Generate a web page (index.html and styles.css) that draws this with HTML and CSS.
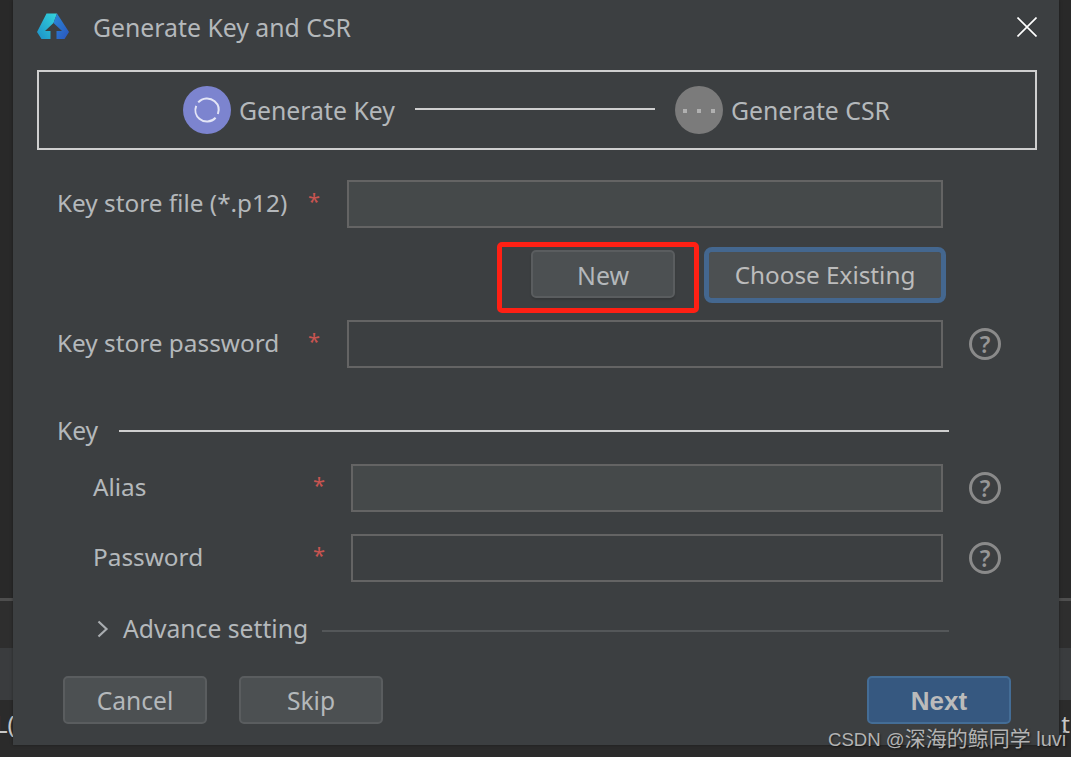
FILE: index.html
```html
<!DOCTYPE html>
<html lang="en">
<head>
<meta charset="utf-8">
<title>Generate Key and CSR</title>
<link rel="stylesheet" href="styles.css">
</head>
<body>
<div class="stage">
  <div class="band band-top"></div>
  <div class="band-line"></div>
  <div class="band band-mid"></div>
  <div class="band band-light"></div>
  <div class="band band-bottom">
    <span class="peek peek-left">L(</span>
    <span class="peek peek-right">t</span>
  </div>
</div>

<section class="dialog">
  <header class="titlebar">
    <svg class="logo" viewBox="0 0 32 26" width="32" height="26" aria-hidden="true">
      <defs>
        <linearGradient id="lg-a" x1="0" y1="1" x2="1" y2="0">
          <stop offset="0" stop-color="#1c8fc8"/>
          <stop offset="1" stop-color="#34d6dc"/>
        </linearGradient>
        <linearGradient id="lg-b" x1="0" y1="0" x2="1" y2="1">
          <stop offset="0" stop-color="#2a8ad8"/>
          <stop offset="1" stop-color="#2b55bd"/>
        </linearGradient>
      </defs>
      <path fill="url(#lg-a)" d="M9.5 0.5H20L16.5 10L8 18H13.5V26H4.5L0 19Z"/>
      <path fill="url(#lg-b)" d="M20 0.5L32 19L27.5 26H19.5V18H25L16.5 10Z"/>
    </svg>
    <h1 class="title">Generate Key and CSR</h1>
    <svg class="close" viewBox="0 0 20 20" width="20" height="20" aria-hidden="true">
      <path d="M0.5 0.5L19.5 19.5M19.5 0.5L0.5 19.5" stroke="#fff" stroke-width="1.6" fill="none"/>
    </svg>
  </header>

  <div class="steps">
    <div class="step">
      <span class="dot dot-active">
        <svg viewBox="0 0 48 48" width="48" height="48" aria-hidden="true">
          <circle cx="24" cy="24" r="11.6" fill="none" stroke="#e3e5f6" stroke-width="2" stroke-dasharray="32 4.45" transform="rotate(-139 24 24)"/>
        </svg>
      </span>
      <span class="step-name">Generate Key</span>
    </div>
    <span class="step-line"></span>
    <div class="step">
      <span class="dot dot-idle">
        <svg viewBox="0 0 48 48" width="48" height="48" aria-hidden="true">
          <rect x="8" y="23" width="4" height="4" fill="#b0b0b0"/>
          <rect x="22" y="23" width="4" height="4" fill="#b0b0b0"/>
          <rect x="36" y="23" width="4" height="4" fill="#b0b0b0"/>
        </svg>
      </span>
      <span class="step-name">Generate CSR</span>
    </div>
  </div>

  <form class="form">
    <div class="row row-file">
      <label class="label">Key store file (*.p12)</label>
      <span class="star">*</span>
      <span class="input input-disabled"></span>
    </div>

    <div class="actions">
      <span class="new-wrap">
        <button type="button" class="btn">New</button>
        <span class="annotation"></span>
      </span>
      <button type="button" class="btn btn-focus">Choose Existing</button>
    </div>

    <div class="row row-pass">
      <label class="label">Key store password</label>
      <span class="star">*</span>
      <span class="input"></span>
      <span class="help">?</span>
    </div>

    <div class="group-head">
      <span class="group-name">Key</span>
      <span class="group-line"></span>
    </div>

    <div class="row row-sub row-alias">
      <label class="label">Alias</label>
      <span class="star">*</span>
      <span class="input input-disabled"></span>
      <span class="help">?</span>
    </div>

    <div class="row row-sub row-password">
      <label class="label">Password</label>
      <span class="star">*</span>
      <span class="input"></span>
      <span class="help">?</span>
    </div>

    <div class="advance">
      <svg class="chevron" viewBox="0 0 12 18" width="12" height="18" aria-hidden="true">
        <path d="M1.5 1.5L9.5 9L1.5 16.5" fill="none" stroke="#a9adb0" stroke-width="2.2"/>
      </svg>
      <span class="advance-name">Advance setting</span>
      <span class="advance-line"></span>
    </div>
  </form>

  <footer class="footer">
    <button type="button" class="btn">Cancel</button>
    <button type="button" class="btn">Skip</button>
    <button type="button" class="btn btn-primary">Next</button>
  </footer>
</section>

<div class="watermark">CSDN @<span class="watermark-cjk">深海的鲸同学</span><span class="watermark-end"> luvi</span></div>
</body>
</html>
```

FILE: styles.css
```css
* {
  box-sizing: border-box;
}

html,
body {
  margin: 0;
  height: 100%;
  overflow: hidden;
}

body {
  position: relative;
  width: 1071px;
  height: 757px;
  background: #2b2b2b;
  font-family: "Noto Sans", "Open Sans", sans-serif;
  color: #b4b8bb;
}

/* IDE behind the dialog */
.stage {
  display: flex;
  flex-direction: column;
  height: 757px;
}

.band-top {
  height: 598px;
  background: #292929;
}

.band-line {
  height: 3px;
  background: #4e4e4e;
}

.band-mid {
  height: 47px;
  background: #2e2e2e;
}

.band-light {
  height: 52px;
  background: #3a3c3e;
}

.band-bottom {
  display: flex;
  justify-content: space-between;
  flex: 1;
  background: #2b2b2b;
  font-size: 24px;
  line-height: 48px;
  color: #c8c8c8;
}

.peek-left {
  margin-left: -5px;
}

.peek-right {
  margin-right: 1px;
}

/* Dialog */
.dialog {
  position: absolute;
  left: 13px;
  top: 0;
  width: 1046px;
  height: 745px;
  padding-left: 24px;
  background: #3c3f41;
  box-shadow: 0 0 3px rgba(0, 0, 0, 0.35);
}

.titlebar {
  display: flex;
  align-items: center;
  height: 54px;
  padding-right: 22px;
}

.logo {
  flex: none;
  margin-bottom: 2px;
}

.title {
  flex: 1;
  margin: 0 0 0 24px;
  font-size: 24.8px;
  font-weight: 400;
  line-height: 54px;
}

.close {
  flex: none;
}

.steps {
  display: flex;
  align-items: center;
  justify-content: center;
  width: 1000px;
  height: 80px;
  margin-top: 16px;
  padding-right: 1px;
  border: 2px solid #cfcfcf;
}

.step {
  display: flex;
  align-items: center;
  gap: 8px;
}

.dot {
  display: block;
  width: 48px;
  height: 48px;
  border-radius: 50%;
}

.dot svg {
  display: block;
}

.dot-active {
  background: #7c84cf;
}

.dot-idle {
  background: #7b7b7b;
}

.step-name {
  font-size: 24.8px;
  line-height: 32px;
}

.step-line {
  width: 240px;
  height: 2px;
  margin: -2px 20px 0 20px;
  background: #cfcfcf;
}

/* Form */
.form {
  display: flex;
  flex-direction: column;
  margin-top: 30px;
  padding-left: 21px;
}

.row {
  display: flex;
  align-items: center;
  height: 48px;
  font-size: 24.35px;
}

.label {
  flex: none;
  width: 251px;
  margin: -3px 0 0 -1px;
}

.star {
  flex: none;
  width: 39px;
  margin-top: -8px;
  color: #c75450;
  font-size: 22px;
}

.input {
  flex: none;
  width: 596px;
  height: 48px;
  border: 2px solid #646464;
  background: #3c3f41;
}

.input-disabled {
  background: #45494a;
}

.help {
  flex: none;
  width: 32px;
  height: 32px;
  margin-left: 26px;
  border: 3px solid #8a8a8a;
  border-radius: 50%;
  color: #969696;
  font-size: 23px;
  font-weight: 600;
  line-height: 26px;
  text-align: center;
}

.actions {
  display: flex;
  align-items: flex-start;
  justify-content: flex-end;
  gap: 34px;
  width: 883px;
  height: 72px;
  padding-top: 22px;
  margin-bottom: 20px;
}

.new-wrap {
  position: relative;
  display: block;
}

.annotation {
  position: absolute;
  left: -34px;
  top: -8px;
  width: 202px;
  height: 71px;
  border: 5px solid #ff2014;
  border-radius: 5px;
}

.btn {
  display: block;
  width: 144px;
  height: 48px;
  padding: 0;
  border: 2px solid #5a5d5f;
  border-radius: 5px;
  background: #4c5052;
  color: #b4b8bb;
  font-family: inherit;
  font-size: 24.6px;
  line-height: 44px;
}

.new-wrap .btn {
  padding-top: 1px;
  font-size: 24.9px;
  box-shadow: 0 2px 2px rgba(0, 0, 0, 0.12);
}

.btn-focus {
  width: 232px;
  height: 46px;
  margin-top: 2px;
  outline: 5px solid #44678f;
  outline-offset: 0;
  border: 0;
  border-radius: 3px;
  font-size: 24.3px;
  line-height: 46px;
  color: #bcbcbc;
}

.group-head {
  display: flex;
  align-items: center;
  gap: 21px;
  width: 891px;
  height: 48px;
  margin-top: 39px;
  font-size: 24.6px;
}

.group-name {
  margin-left: -1px;
  line-height: 48px;
}

.group-line {
  flex: 1;
  height: 2px;
  margin-top: -1px;
  background: #cfcfcf;
}

.row-sub {
  padding-left: 36px;
}

.row-sub .label {
  width: 220px;
}

.row-sub .star {
  width: 38px;
}

.row-sub .input {
  width: 592px;
}

.row-alias {
  margin-top: 9px;
}

.row-password {
  margin-top: 22px;
}

.advance {
  display: flex;
  align-items: center;
  width: 891px;
  height: 40px;
  margin-top: 27px;
  padding-left: 39px;
  font-size: 24.7px;
}

.chevron {
  flex: none;
  margin-right: 14px;
}

.advance-name {
  line-height: 40px;
}

.advance-line {
  flex: 1;
  height: 2px;
  margin: 3px 0 0 14px;
  background: #545759;
}

.footer {
  display: flex;
  gap: 32px;
  width: 948px;
  margin-top: 27px;
  margin-left: 26px;
}

.footer .btn {
  padding-top: 1px;
}

.footer .btn-primary {
  margin-left: auto;
  border-color: #446d96;
  background: #365880;
  font-family: "Liberation Sans", sans-serif;
  font-size: 26px;
  font-weight: 700;
  color: #bbbbbb;
}

.watermark {
  position: absolute;
  left: 828px;
  top: 726px;
  font-family: "Liberation Sans", "Noto Sans CJK SC", sans-serif;
  font-size: 18.6px;
  line-height: 26px;
  color: #b3b3b3;
  text-shadow: 1px 1px 2px rgba(0, 0, 0, 0.5);
  white-space: nowrap;
}

.watermark-cjk {
  font-size: 21px;
}

.watermark-end {
  font-size: 20px;
}
```
